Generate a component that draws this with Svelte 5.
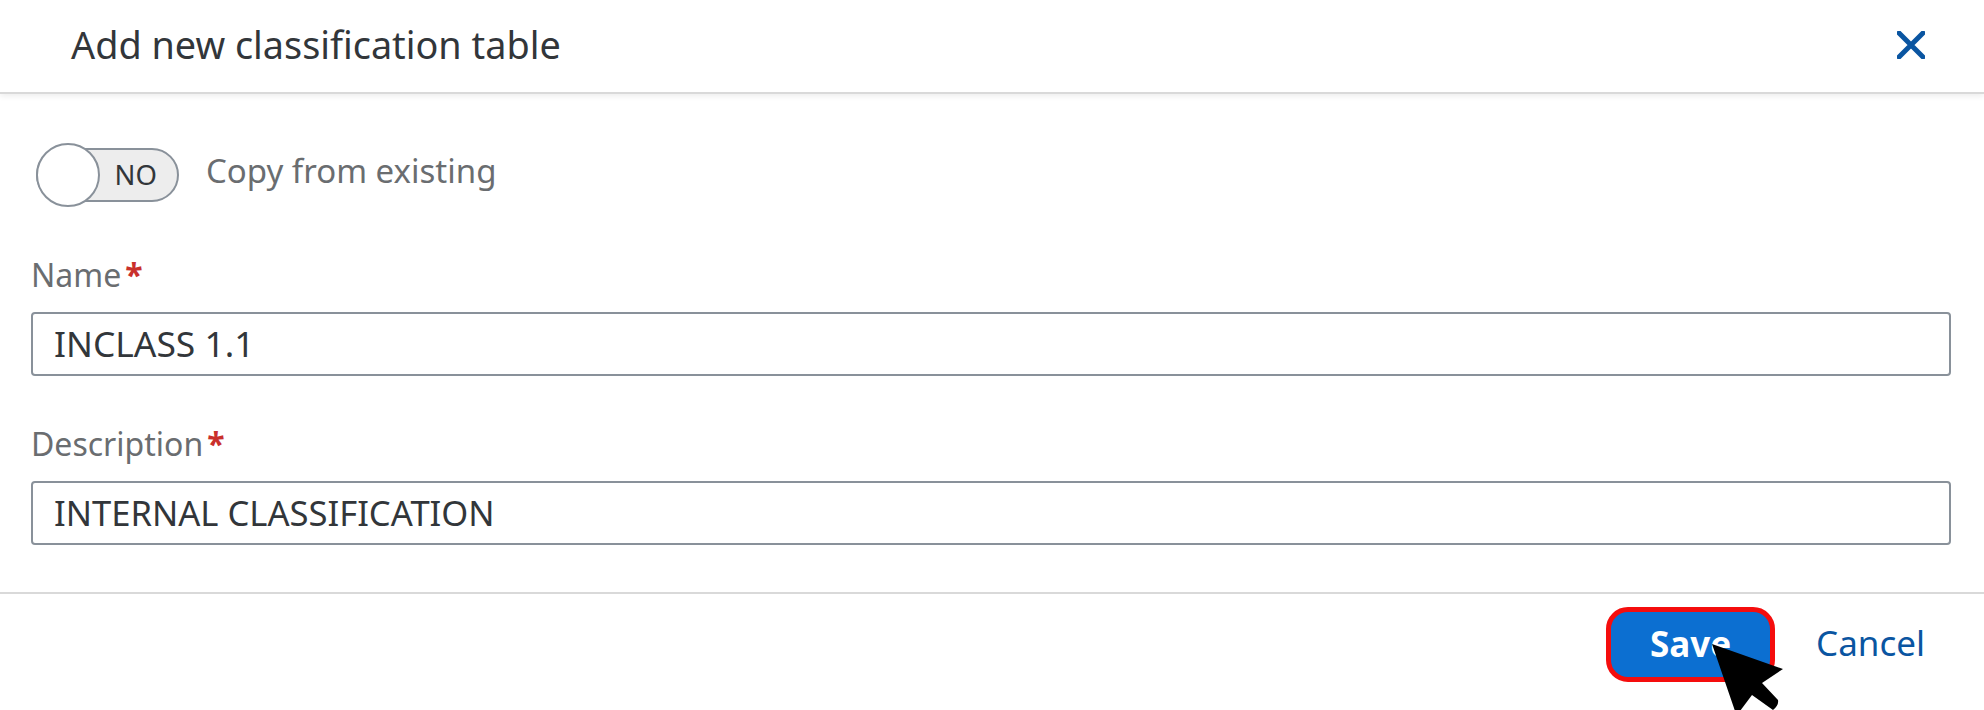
<script>
  let name = 'INCLASS 1.1';
  let description = 'INTERNAL CLASSIFICATION';
</script>

<div class="dialog">
  <header class="head">
    <h1>Add new classification table</h1>
    <button class="close" aria-label="Close">
      <svg viewBox="0 0 28 28" width="28" height="28"><path d="M2 2 26 26M26 2 2 26" fill="none" stroke="#0a55a1" stroke-width="5" stroke-linecap="round"/></svg>
    </button>
  </header>

  <div class="body">
    <div class="switch-row">
      <div class="switch">
        <span class="knob"></span>
        <span class="no">NO</span>
      </div>
      <span class="switch-label">Copy from existing</span>
    </div>

    <div class="field first">
      <div class="label">Name<span class="req">*</span></div>
      <div class="input">{name}</div>
    </div>
    <div class="field second">
      <div class="label">Description<span class="req">*</span></div>
      <div class="input description">{description}</div>
    </div>
  </div>

  <footer class="foot">
    <button class="save">Save</button>
    <button class="cancel">Cancel</button>
  </footer>

  <svg class="cursor" viewBox="0 0 80 90" width="80" height="90">
    <path d="M1 1 72 26 51 40 67 57Q68 62 62 67L41 52 29 68 24 68Z" fill="#000"/>
  </svg>
</div>

<style>
  :global(body) {
    margin: 0;
    background: #fff;
    overflow: hidden;
  }
  .dialog {
    position: relative;
    width: 1984px;
    height: 710px;
    overflow: hidden;
    background: #fff;
    font-family: "Noto Sans", "Open Sans", sans-serif;
    color: #32363a;
  }
  .head {
    display: flex;
    align-items: center;
    justify-content: space-between;
    box-sizing: border-box;
    height: 94px;
    padding: 0 59px 2px 71px;
    border-bottom: 2px solid #d9d9d9;
    box-shadow: 0 2px 6px rgba(0, 0, 0, 0.08);
  }
  h1 {
    margin: 0;
    font-size: 37.8px;
    font-weight: 400;
    line-height: 44px;
  }
  .close {
    display: flex;
    padding: 0;
    border: 0;
    background: none;
  }
  .body {
    box-sizing: border-box;
    height: 500px;
    padding: 54px 33px 0 31px;
    border-bottom: 2px solid #d9d9d9;
  }
  .switch-row {
    display: flex;
    align-items: center;
    gap: 27px;
    padding-left: 5px;
  }
  .switch {
    position: relative;
    display: flex;
    align-items: center;
    justify-content: flex-end;
    box-sizing: border-box;
    width: 143px;
    height: 54px;
    padding: 0 20px 2px 0;
    border: 2px solid #89919a;
    border-radius: 27px;
    background: #ededed;
  }
  .knob {
    position: absolute;
    left: -2px;
    top: -7px;
    box-sizing: border-box;
    width: 64px;
    height: 64px;
    border: 2px solid #89919a;
    border-radius: 50%;
    background: #fff;
  }
  .no {
    font-size: 27.5px;
  }
  .switch-label {
    margin-top: -9px;
    font-size: 33px;
    color: #6a6d70;
  }
  .field.first {
    margin-top: 53px;
  }
  .field.second {
    margin-top: 48px;
  }
  .label {
    display: flex;
    gap: 4px;
    height: 40px;
    font-size: 32px;
    line-height: 40px;
    color: #6a6d70;
  }
  .req {
    color: #c9302c;
    font-weight: 700;
  }
  .input {
    display: flex;
    align-items: center;
    box-sizing: border-box;
    height: 64px;
    margin-top: 17px;
    padding: 0 0 2px 21px;
    border: 2px solid #89919a;
    border-radius: 4px;
    font-size: 35.4px;
  }
  .input.description {
    font-size: 34.6px;
  }
  .foot {
    display: flex;
    align-items: center;
    padding: 13px 59px 0 1606px;
  }
  .save {
    box-sizing: border-box;
    width: 172px;
    height: 75px;
    padding: 0 0 2px;
    border: 5px solid #f50d0d;
    border-radius: 22px;
    background: #0c6fd1;
    color: #fff;
    font: 700 35px "Noto Sans", sans-serif;
  }
  .cancel {
    margin-left: 41px;
    padding: 0 0 4px;
    border: 0;
    background: none;
    color: #0a55a1;
    font: 400 35px "Noto Sans", sans-serif;
  }
  .cursor {
    position: absolute;
    left: 1711px;
    top: 643px;
  }
</style>
